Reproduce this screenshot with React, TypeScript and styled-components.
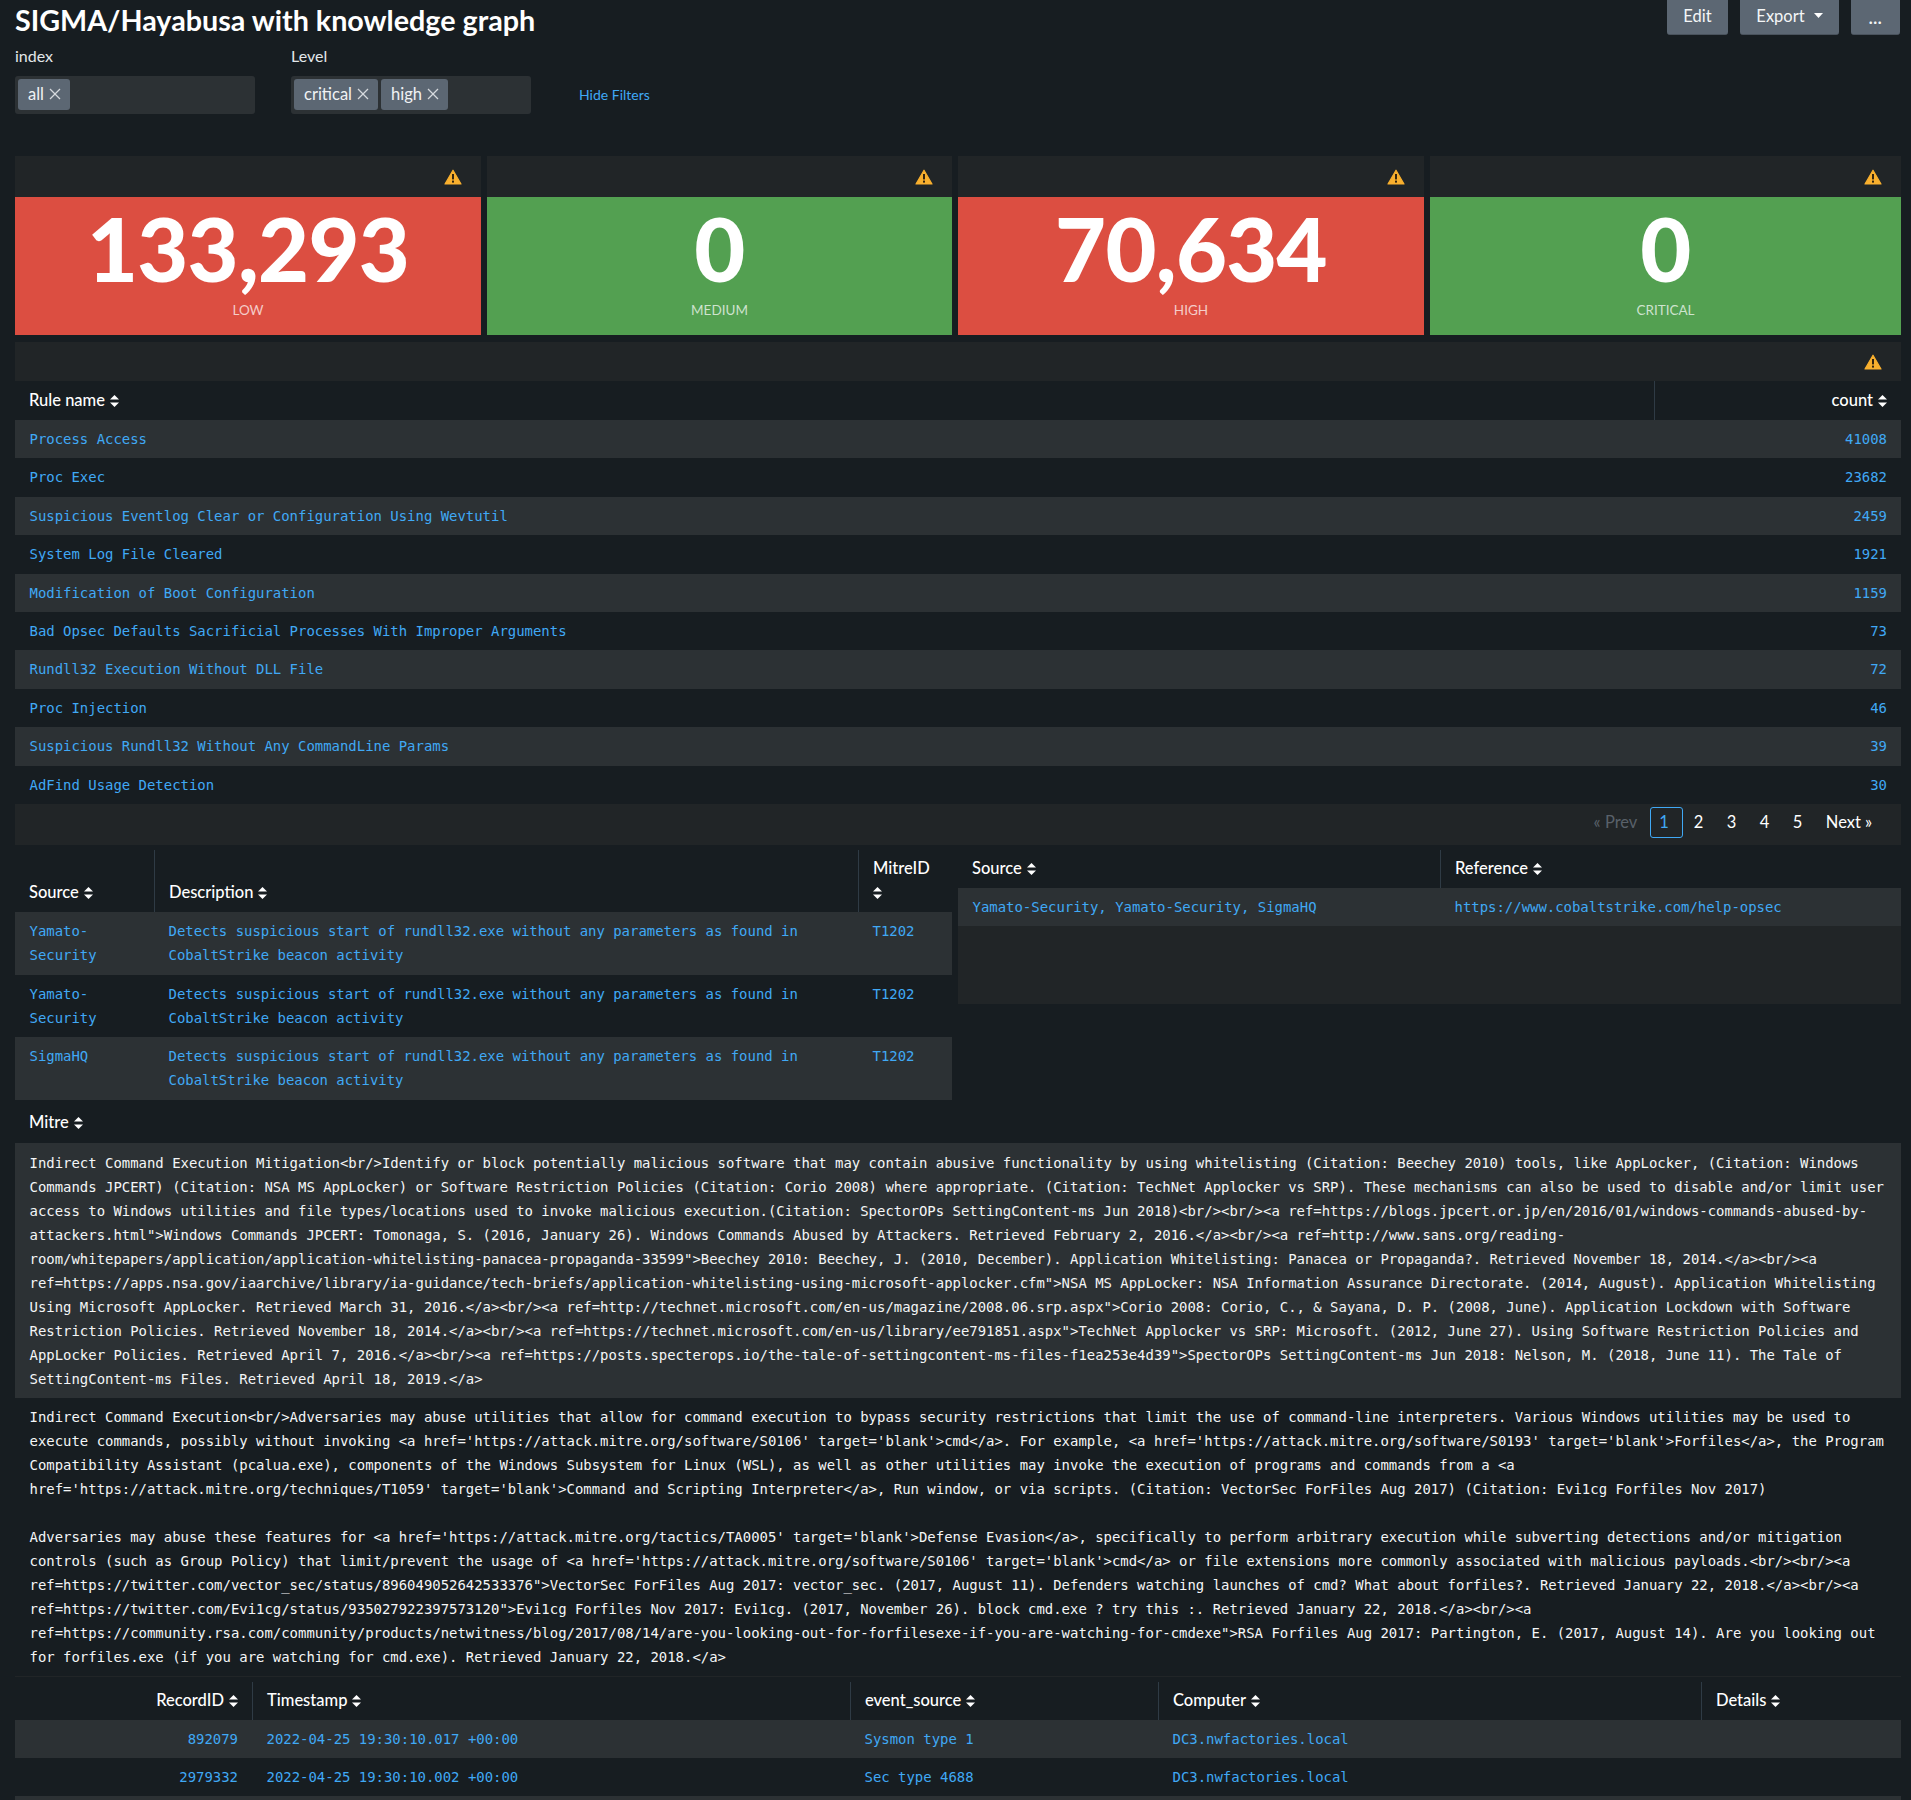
import React from "react";
import styled, { createGlobalStyle } from "styled-components";

const Global = createGlobalStyle`
  html, body { margin: 0; padding: 0; background: #171d21; }
  * { box-sizing: border-box; }
`;

const SANS = `Lato, "Liberation Sans", sans-serif`;
const MONO = `"DejaVu Sans Mono", "Liberation Mono", monospace`;
const LINK = "#40a9f5";
const PANEL = "#212527";
const ALT = "#2c3134";

const Page = styled.div`
  width: 1911px;
  height: 1800px;
  overflow: hidden;
  padding: 0 10px 0 15px;
  background: #171d21;
  font-family: ${SANS};
  color: #fff;
`;
const TopBar = styled.header`
  display: flex;
  justify-content: space-between;
  align-items: flex-start;
  height: 46px;
`;
const Title = styled.h1`
  margin: 2px 0 0;
  font-size: 28.7px;
  line-height: 36px;
  font-weight: 700;
  color: #fff;
`;
const Actions = styled.div`
  display: flex;
  gap: 12px;
  margin-right: 1px;
`;
const ActionButton = styled.button<{ $w: number }>`
  width: ${(p) => p.$w}px;
  height: 35px;
  padding: 0 0 3px;
  display: flex;
  align-items: center;
  justify-content: center;
  gap: 9px;
  border: 0;
  border-bottom: 1px solid #4a535d;
  border-radius: 0 0 3px 3px;
  background: #5c6773;
  color: #f4f6f7;
  font-family: ${SANS};
  font-size: 16.5px;
`;
const Dots = styled.span`
  position: relative;
  top: 2px;
  font-weight: 700;
  letter-spacing: 0.5px;
`;
const FilterRow = styled.section`
  display: flex;
  align-items: flex-end;
  gap: 36px;
  margin-bottom: 42px;
`;
const Field = styled.div`
  width: 240px;
`;
const FieldLabel = styled.label`
  display: block;
  height: 30px;
  font-size: 16px;
  line-height: 20px;
  color: #e3e7ea;
`;
const TagInput = styled.div`
  display: flex;
  gap: 3px;
  height: 38px;
  padding: 3px;
  border-radius: 3px;
  background: #2c3134;
`;
const Tag = styled.span`
  display: flex;
  align-items: center;
  gap: 5px;
  height: 31px;
  padding: 0 9px 2px 10px;
  border-radius: 3px;
  background: #5c6773;
  color: #f0f2f4;
  font-size: 16.5px;
`;
const HideLink = styled.a`
  align-self: flex-end;
  margin: 0 0 10px 12px;
  font-size: 14px;
  line-height: 18px;
  color: ${LINK};
`;
const StatRow = styled.section`
  display: grid;
  grid-template-columns: 466px 465px 466px 1fr;
  gap: 6px;
`;
const Stat = styled.div`
  background: ${PANEL};
`;
const PanelHead = styled.div<{ $h: number; $pad?: number }>`
  display: flex;
  justify-content: flex-end;
  align-items: center;
  height: ${(p) => p.$h}px;
  padding-right: ${(p) => p.$pad ?? 19}px;
  background: ${PANEL};
`;
const StatBody = styled.div<{ $bad: boolean }>`
  height: 138px;
  display: flex;
  flex-direction: column;
  align-items: center;
  background: ${(p) => (p.$bad ? "#dc4e41" : "#53a051")};
`;
const StatValue = styled.div`
  font-size: 88px;
  line-height: 103px;
  font-weight: 900;
  letter-spacing: -0.7px;
  color: #fff;
`;
const StatLabel = styled.div`
  font-size: 13.5px;
  line-height: 20px;
  color: rgba(255, 255, 255, 0.72);
`;
const Section = styled.section<{ $top?: number }>`
  margin-top: ${(p) => p.$top ?? 0}px;
`;
const Table = styled.table`
  width: 100%;
  border-collapse: separate;
  border-spacing: 0;
  table-layout: fixed;
`;
const Th = styled.th<{ $right?: boolean; $w?: number; $h?: number }>`
  width: ${(p) => (p.$w ? `${p.$w}px` : "auto")};
  height: ${(p) => p.$h ?? 38}px;
  padding: 4px 14px 8px;
  border-left: 1px solid #2f3b45;
  font-size: 16.5px;
  line-height: 24px;
  font-weight: 500;
  color: #fff;
  text-align: ${(p) => (p.$right ? "right" : "left")};
  vertical-align: bottom;
  &:first-child {
    border-left: 0;
  }
`;
const HeadLabel = styled.span`
  margin-right: 5px;
`;
const Row = styled.tr<{ $alt: boolean }>`
  background: ${(p) => (p.$alt ? ALT : "#171d21")};
`;
const Td = styled.td<{ $right?: boolean; $h?: number }>`
  height: ${(p) => p.$h ?? 38.4}px;
  padding: 7px 14px 7px 14.5px;
  font-family: ${MONO};
  font-size: 13.95px;
  line-height: 24px;
  color: ${LINK};
  text-align: ${(p) => (p.$right ? "right" : "left")};
  vertical-align: top;
`;
const Pager = styled.nav`
  display: flex;
  justify-content: flex-end;
  align-items: center;
  height: 41px;
  padding: 0 16px 4px 0;
  background: ${PANEL};
  font-size: 16.5px;
`;
const PageLink = styled.span<{ $current?: boolean; $off?: boolean; $w?: number }>`
  display: flex;
  align-items: center;
  justify-content: center;
  width: ${(p) => p.$w ?? 33}px;
  height: 31px;
  padding: 0 ${(p) => (p.$current ? 5 : 2)}px 1px 0;
  border: ${(p) => (p.$current ? `1px solid ${LINK}` : "0")};
  border-radius: 3px;
  color: ${(p) => (p.$current ? LINK : p.$off ? "#59616a" : "#fff")};
`;
const Split = styled.section`
  display: grid;
  grid-template-columns: 937px 943px;
  gap: 6px;
  margin-top: 5px;
  align-items: start;
`;
const Filler = styled.div`
  height: 78px;
  background: ${PANEL};
`;
const MitreHead = styled.div`
  height: 43px;
  padding: 10px 14px 0;
  font-size: 16.5px;
  line-height: 24px;
  font-weight: 500;
`;
const MitreText = styled.div<{ $alt: boolean }>`
  padding: ${(p) => (p.$alt ? "8px 14px 7px 14.5px" : "7px 14px 7px 14.5px")};
  background: ${(p) => (p.$alt ? ALT : "#171d21")};
  border-bottom: ${(p) => (p.$alt ? "0" : `1px solid ${PANEL}`)};
  font-family: ${MONO};
  font-size: 13.95px;
  line-height: 24px;
  color: #f4f6f7;
  white-space: pre-wrap;
`;
const TriIcon = styled.svg`
  display: inline-block;
  vertical-align: -1px;
`;

const Sort = () => (
  <TriIcon width="9" height="12" viewBox="0 0 9 12" fill="#fff">
    <polygon points="4.5,0 9,4.5 0,4.5" />
    <polygon points="0,7.5 9,7.5 4.5,12" />
  </TriIcon>
);
const Warn = () => (
  <svg width="18" height="16" viewBox="0 0 18 16">
    <path d="M9 1.2 L17 15 H1 Z" fill="#f9b02e" stroke="#f9b02e" strokeWidth="1.2" strokeLinejoin="round" />
    <rect x="8" y="5" width="2" height="5.4" fill="#33240f" />
    <rect x="8" y="11.6" width="2" height="2" fill="#33240f" />
  </svg>
);
const Close = () => (
  <svg width="12" height="12" viewBox="0 0 12 12" stroke="#d5d9dd" strokeWidth="1.3">
    <line x1="1" y1="1" x2="11" y2="11" />
    <line x1="11" y1="1" x2="1" y2="11" />
  </svg>
);
const Caret = () => (
  <svg width="9" height="5" viewBox="0 0 9 5" fill="#fff">
    <polygon points="0,0 9,0 4.5,5" />
  </svg>
);

const stats: [string, string, boolean][] = [
  ["133,293", "LOW", true],
  ["0", "MEDIUM", false],
  ["70,634", "HIGH", true],
  ["0", "CRITICAL", false],
];
const rules: [string, string][] = [
  ["Process Access", "41008"],
  ["Proc Exec", "23682"],
  ["Suspicious Eventlog Clear or Configuration Using Wevtutil", "2459"],
  ["System Log File Cleared", "1921"],
  ["Modification of Boot Configuration", "1159"],
  ["Bad Opsec Defaults Sacrificial Processes With Improper Arguments", "73"],
  ["Rundll32 Execution Without DLL File", "72"],
  ["Proc Injection", "46"],
  ["Suspicious Rundll32 Without Any CommandLine Params", "39"],
  ["AdFind Usage Detection", "30"],
];
const DESC = "Detects suspicious start of rundll32.exe without any parameters as found in CobaltStrike beacon activity";
const sources = ["Yamato-Security", "Yamato-Security", "SigmaHQ"];

const mitre1 = `Indirect Command Execution Mitigation<br/>Identify or block potentially malicious software that may contain abusive functionality by using whitelisting (Citation: Beechey 2010) tools, like AppLocker, (Citation: Windows Commands JPCERT) (Citation: NSA MS AppLocker) or Software Restriction Policies (Citation: Corio 2008) where appropriate. (Citation: TechNet Applocker vs SRP). These mechanisms can also be used to disable and/or limit user access to Windows utilities and file types/locations used to invoke malicious execution.(Citation: SpectorOPs SettingContent-ms Jun 2018)<br/><br/><a ref=https://blogs.jpcert.or.jp/en/2016/01/windows-commands-abused-by-attackers.html">Windows Commands JPCERT: Tomonaga, S. (2016, January 26). Windows Commands Abused by Attackers. Retrieved February 2, 2016.</a><br/><a ref=http://www.sans.org/reading-room/whitepapers/application/application-whitelisting-panacea-propaganda-33599">Beechey 2010: Beechey, J. (2010, December). Application Whitelisting: Panacea or Propaganda?. Retrieved November 18, 2014.</a><br/><a ref=https://apps.nsa.gov/iaarchive/library/ia-guidance/tech-briefs/application-whitelisting-using-microsoft-applocker.cfm">NSA MS AppLocker: NSA Information Assurance Directorate. (2014, August). Application Whitelisting Using Microsoft AppLocker. Retrieved March 31, 2016.</a><br/><a ref=http://technet.microsoft.com/en-us/magazine/2008.06.srp.aspx">Corio 2008: Corio, C., & Sayana, D. P. (2008, June). Application Lockdown with Software Restriction Policies. Retrieved November 18, 2014.</a><br/><a ref=https://technet.microsoft.com/en-us/library/ee791851.aspx">TechNet Applocker vs SRP: Microsoft. (2012, June 27). Using Software Restriction Policies and AppLocker Policies. Retrieved April 7, 2016.</a><br/><a ref=https://posts.specterops.io/the-tale-of-settingcontent-ms-files-f1ea253e4d39">SpectorOPs SettingContent-ms Jun 2018: Nelson, M. (2018, June 11). The Tale of SettingContent-ms Files. Retrieved April 18, 2019.</a>`;
const mitre2 = `Indirect Command Execution<br/>Adversaries may abuse utilities that allow for command execution to bypass security restrictions that limit the use of command-line interpreters. Various Windows utilities may be used to execute commands, possibly without invoking <a href='https://attack.mitre.org/software/S0106' target='blank'>cmd</a>. For example, <a href='https://attack.mitre.org/software/S0193' target='blank'>Forfiles</a>, the Program Compatibility Assistant (pcalua.exe), components of the Windows Subsystem for Linux (WSL), as well as other utilities may invoke the execution of programs and commands from a <a href='https://attack.mitre.org/techniques/T1059' target='blank'>Command and Scripting Interpreter</a>, Run window, or via scripts. (Citation: VectorSec ForFiles Aug 2017) (Citation: Evi1cg Forfiles Nov 2017)

Adversaries may abuse these features for <a href='https://attack.mitre.org/tactics/TA0005' target='blank'>Defense Evasion</a>, specifically to perform arbitrary execution while subverting detections and/or mitigation controls (such as Group Policy) that limit/prevent the usage of <a href='https://attack.mitre.org/software/S0106' target='blank'>cmd</a> or file extensions more commonly associated with malicious payloads.<br/><br/><a ref=https://twitter.com/vector_sec/status/896049052642533376">VectorSec ForFiles Aug 2017: vector_sec. (2017, August 11). Defenders watching launches of cmd? What about forfiles?. Retrieved January 22, 2018.</a><br/><a ref=https://twitter.com/Evi1cg/status/935027922397573120">Evi1cg Forfiles Nov 2017: Evi1cg. (2017, November 26). block cmd.exe ? try this :. Retrieved January 22, 2018.</a><br/><a ref=https://community.rsa.com/community/products/netwitness/blog/2017/08/14/are-you-looking-out-for-forfilesexe-if-you-are-watching-for-cmdexe">RSA Forfiles Aug 2017: Partington, E. (2017, August 14). Are you looking out for forfiles.exe (if you are watching for cmd.exe). Retrieved January 22, 2018.</a>`;

const events = [
  ["892079", "2022-04-25 19:30:10.017 +00:00", "Sysmon type 1", "DC3.nwfactories.local", ""],
  ["2979332", "2022-04-25 19:30:10.002 +00:00", "Sec type 4688", "DC3.nwfactories.local", ""],
  ["", "", "", "", ""],
];

export default function App() {
  return (
    <Page>
      <Global />
      <TopBar>
        <Title>SIGMA/Hayabusa with knowledge graph</Title>
        <Actions>
          <ActionButton $w={61}>Edit</ActionButton>
          <ActionButton $w={99}>
            Export <Caret />
          </ActionButton>
          <ActionButton $w={49}>
            <Dots>...</Dots>
          </ActionButton>
        </Actions>
      </TopBar>
      <FilterRow>
        <Field>
          <FieldLabel>index</FieldLabel>
          <TagInput>
            <Tag>
              all <Close />
            </Tag>
          </TagInput>
        </Field>
        <Field>
          <FieldLabel>Level</FieldLabel>
          <TagInput>
            <Tag>
              critical <Close />
            </Tag>
            <Tag>
              high <Close />
            </Tag>
          </TagInput>
        </Field>
        <HideLink>Hide Filters</HideLink>
      </FilterRow>

      <StatRow>
        {stats.map(([value, label]) => (
          <Stat key={label}>
            <PanelHead $h={41}>
              <Warn />
            </PanelHead>
            <StatBody $bad={value !== "0"}>
              <StatValue>{value}</StatValue>
              <StatLabel>{label}</StatLabel>
            </StatBody>
          </Stat>
        ))}
      </StatRow>

      <Section $top={7}>
        <PanelHead $h={39} $pad={19}>
          <Warn />
        </PanelHead>
        <Table>
          <thead>
            <tr>
              <Th $w={1639} $h={39}>
                <HeadLabel>Rule name</HeadLabel>
                <Sort />
              </Th>
              <Th $right $h={39}>
                <HeadLabel>count</HeadLabel>
                <Sort />
              </Th>
            </tr>
          </thead>
          <tbody>
            {rules.map(([name, count], i) => (
              <Row key={name} $alt={i % 2 === 0}>
                <Td>{name}</Td>
                <Td $right>{count}</Td>
              </Row>
            ))}
          </tbody>
        </Table>
        <Pager>
          <PageLink $off $w={67}>
            « Prev
          </PageLink>
          <PageLink $current>1</PageLink>
          <PageLink>2</PageLink>
          <PageLink>3</PageLink>
          <PageLink>4</PageLink>
          <PageLink>5</PageLink>
          <PageLink $w={70}>Next »</PageLink>
        </Pager>
      </Section>

      <Split>
        <Table>
          <thead>
            <tr>
              <Th $w={139} $h={62}>
                <HeadLabel>Source</HeadLabel>
                <Sort />
              </Th>
              <Th $w={704} $h={62}>
                <HeadLabel>Description</HeadLabel>
                <Sort />
              </Th>
              <Th $h={62}>
                <HeadLabel>MitreID</HeadLabel> <Sort />
              </Th>
            </tr>
          </thead>
          <tbody>
            {sources.map((src, i) => (
              <Row key={i} $alt={i % 2 === 0}>
                <Td $h={62.6}>{src}</Td>
                <Td $h={62.6}>{DESC}</Td>
                <Td $h={62.6}>T1202</Td>
              </Row>
            ))}
          </tbody>
        </Table>
        <div>
          <Table>
            <thead>
              <tr>
                <Th $w={482}>
                  <HeadLabel>Source</HeadLabel>
                  <Sort />
                </Th>
                <Th>
                  <HeadLabel>Reference</HeadLabel>
                  <Sort />
                </Th>
              </tr>
            </thead>
            <tbody>
              <Row $alt>
                <Td>Yamato-Security, Yamato-Security, SigmaHQ</Td>
                <Td>https://www.cobaltstrike.com/help-opsec</Td>
              </Row>
            </tbody>
          </Table>
          <Filler />
        </div>
      </Split>

      <Section>
        <MitreHead>
          <HeadLabel>Mitre</HeadLabel>
          <Sort />
        </MitreHead>
        <MitreText $alt>{mitre1}</MitreText>
        <MitreText $alt={false}>{mitre2}</MitreText>
      </Section>

      <Section $top={5}>
        <Table>
          <thead>
            <tr>
              <Th $w={237} $right>
                <HeadLabel>RecordID</HeadLabel>
                <Sort />
              </Th>
              <Th $w={598}>
                <HeadLabel>Timestamp</HeadLabel>
                <Sort />
              </Th>
              <Th $w={308}>
                <HeadLabel>event_source</HeadLabel>
                <Sort />
              </Th>
              <Th $w={543}>
                <HeadLabel>Computer</HeadLabel>
                <Sort />
              </Th>
              <Th>
                <HeadLabel>Details</HeadLabel>
                <Sort />
              </Th>
            </tr>
          </thead>
          <tbody>
            {events.map((e, i) => (
              <Row key={i} $alt={i % 2 === 0}>
                <Td $right>{e[0]}</Td>
                <Td>{e[1]}</Td>
                <Td>{e[2]}</Td>
                <Td>{e[3]}</Td>
                <Td>{e[4]}</Td>
              </Row>
            ))}
          </tbody>
        </Table>
      </Section>
    </Page>
  );
}
